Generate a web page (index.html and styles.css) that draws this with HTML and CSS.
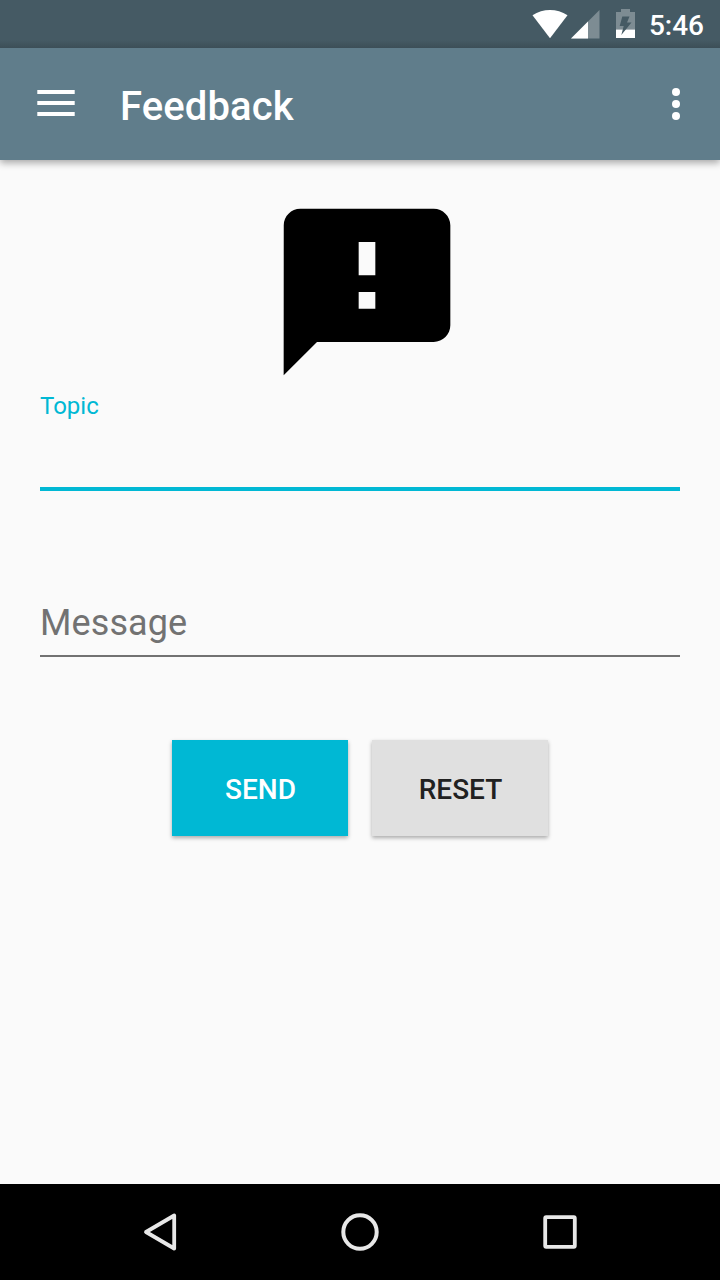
FILE: index.html
```html
<!DOCTYPE html>
<html lang="en">
<head>
<meta charset="utf-8">
<title>Feedback</title>
<link rel="stylesheet" href="styles.css">
</head>
<body>
<div class="screen">
  <div class="status-bar">
    <svg class="status-icons" width="110" height="48" viewBox="530 0 110 48">
      <path fill="#fff" d="M532.5 15.2C543 8.2 557 8.2 567.5 15.2L550 38.2Z"/>
      <path fill="#7d8c93" d="M599.5 10V38.5H571Z"/>
      <path fill="#fff" d="M588 21.5V38.5H571Z"/>
      <path fill="#7d8c93" d="M621 9H630V12H635V29.500H616V12H621Z"/>
      <path fill="#fff" d="M616 29.500H635V38H616Z"/>
      <path fill="#455a64" d="M622.300 16.500H629.500L627 22.500H631.500L621.300 35L623.700 26H619.700Z"/>
    </svg>
    <span class="clock">5:46</span>
  </div>
  <header class="app-bar">
    <svg class="menu-icon" width="38" height="26" viewBox="0 0 38 26">
      <path fill="#fff" d="M.3 0H37.700V4H.3ZM.3 11H37.700V15H.3ZM.3 22H37.700V26H.3Z"/>
    </svg>
    <h1 class="title">Feedback</h1>
    <svg class="more-icon" width="8" height="32" viewBox="0 0 8 32">
      <g fill="#fff"><circle cx="4" cy="4" r="4"/><circle cx="4" cy="16" r="4"/><circle cx="4" cy="28" r="4"/></g>
    </svg>
  </header>
  <main class="content">
    <svg class="feedback-icon" width="200" height="200" viewBox="0 0 24 24">
      <path d="M20 2H4c-1.100 0-1.990.9-1.990 2L2 22l4-4h14c1.100 0 2-.9 2-2V4c0-1.100-.9-2-2-2zm-7 12h-2v-2h2v2zm0-4h-2V6h2v4z"/>
    </svg>
    <div class="field field-topic"><label class="label-small">Topic</label></div>
    <div class="field field-message"><label class="label-hint">Message</label></div>
    <div class="actions">
      <button class="button button-send">SEND</button>
      <button class="button button-reset">RESET</button>
    </div>
  </main>
  <nav class="nav-bar">
    <svg width="200" height="96" viewBox="60 1184 200 96"><path d="M174.200 1215.500V1248.500L146 1232Z" fill="none" stroke="#e8e8e8" stroke-width="3.800" stroke-linejoin="round"/></svg>
    <svg width="200" height="96" viewBox="260 1184 200 96"><circle cx="360" cy="1232" r="16.700" fill="none" stroke="#e8e8e8" stroke-width="4"/></svg>
    <svg width="200" height="96" viewBox="460 1184 200 96"><rect x="545.200" y="1217.200" width="29.600" height="29.600" rx="1" fill="none" stroke="#e8e8e8" stroke-width="3.800"/></svg>
  </nav>
</div>
</body>
</html>
```
FILE: styles.css
```css
* { box-sizing: border-box; }
body { margin: 0; font-family: Roboto, sans-serif; }
.screen {
  display: flex;
  flex-direction: column;
  width: 720px;
  height: 1280px;
  overflow: hidden;
  background: #fafafa;
}
.status-bar {
  display: flex;
  justify-content: flex-end;
  height: 48px;
  padding-right: 16px;
  background: linear-gradient(#455a64 40px, #3c4e57);
}
.status-icons { margin-right: 9px; }
.clock {
  font-size: 28px;
  font-weight: 500;
  line-height: 52px;
  color: #fff;
}
.app-bar {
  display: flex;
  align-items: center;
  height: 112px;
  padding: 0 40px 0 37px;
  background: #607d8b;
  box-shadow: 0 3px 7px rgba(0, 0, 0, .33);
  clip-path: inset(0 0 -16px 0);
}
.menu-icon { margin-top: -2px; }
.title {
  flex: 1;
  margin: 6px 0 0 45px;
  font-size: 40px;
  font-weight: 500;
  line-height: 48px;
  letter-spacing: .12px;
  color: #fff;
}
.content {
  flex: 1;
  display: flex;
  flex-direction: column;
  padding: 32px 40px 0;
}
.feedback-icon { margin-left: 227px; flex: none; }
.field-topic { height: 99px; border-bottom: 4px solid #00b8d4; }
.label-small {
  display: block;
  font-size: 24px;
  line-height: 28px;
  color: #00b8d4;
}
.field-message {
  height: 66px;
  margin-top: 100px;
  border-bottom: 2px solid #727272;
}
.label-hint {
  display: block;
  padding-top: 11px;
  font-size: 36px;
  line-height: 42px;
  letter-spacing: .1px;
  color: #727272;
}
.actions {
  display: flex;
  justify-content: center;
  gap: 24px;
  margin-top: 83px;
}
.button {
  width: 176px;
  height: 96px;
  padding: 4px 0 0 1px;
  border: 0;
  font: 500 28px/32px Roboto, sans-serif;
  box-shadow: 0 2px 4px rgba(0, 0, 0, .32);
}
.button-send { color: #fff; background: #00b8d4; }
.button-reset { color: #212121; background: #e0e0e0; }
.nav-bar {
  display: flex;
  justify-content: center;
  height: 96px;
  background: #000;
}
```
